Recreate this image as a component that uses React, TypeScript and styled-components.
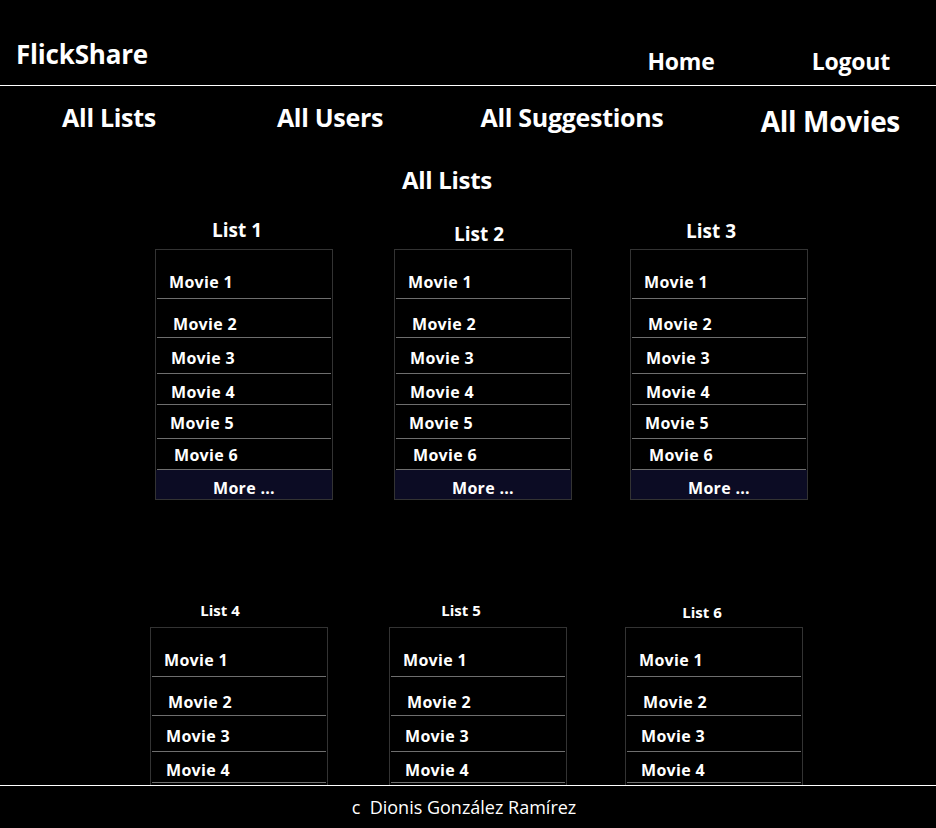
import React from "react";
import styled, { createGlobalStyle } from "styled-components";

const GlobalStyle = createGlobalStyle`
  html, body {
    margin: 0;
    padding: 0;
    background: #000;
    color: #fff;
    font-family: "Open Sans", "Noto Sans", sans-serif;
    overflow: hidden;
  }
  * { box-sizing: border-box; }
`;

const Page = styled.div`
  display: flex;
  flex-direction: column;
  height: 100vh;
  overflow: hidden;
  background: #000;
`;

const Header = styled.header`
  flex: 0 0 86px;
  display: flex;
  align-items: flex-start;
  border-bottom: 1px solid #fff;
`;

const Logo = styled.div`
  padding: 36px 0 0 16px;
  font-size: 26px;
  font-weight: 700;
  letter-spacing: -0.2px;
  line-height: 36px;
`;

const TopLinks = styled.nav`
  margin-left: auto;
  display: flex;
  gap: 97px;
  padding: 45px 46px 0 0;
`;

const TopLink = styled.a`
  font-size: 23px;
  font-weight: 700;
  line-height: 32px;
  letter-spacing: -0.2px;
  color: #fff;
  text-decoration: none;
`;

const NavBar = styled.nav`
  flex: 0 0 62px;
  display: grid;
  grid-template-columns: 218px 224px 260px 1fr;
  align-items: center;
`;

const NavItem = styled.a<{ $big?: boolean }>`
  font-size: ${(p) => (p.$big ? "28px" : "25px")};
  font-weight: 700;
  letter-spacing: -0.3px;
  line-height: 36px;
  color: #fff;
  text-decoration: none;
  text-align: ${(p) => (p.$big ? "right" : "center")};
  padding: ${(p) => (p.$big ? "8px 36px 0 0" : "0")};
`;

const Main = styled.main`
  flex: 1;
  overflow: hidden;
`;

const PageTitle = styled.h1`
  margin: 0;
  height: 64px;
  line-height: 64px;
  text-align: center;
  font-size: 24px;
  font-weight: 700;
  letter-spacing: -0.3px;
  padding-right: 42px;
`;

const CardRow = styled.section<{ $left: number; $top: number }>`
  display: grid;
  grid-template-columns: 239px 236px 178px;
  padding-left: ${(p) => p.$left}px;
  margin-top: ${(p) => p.$top}px;
`;

const Card = styled.div`
  width: 178px;
  display: flex;
  flex-direction: column;
`;

const CardTitle = styled.h2<{ $small?: boolean; $shift: number; $dx: number }>`
  margin: 0;
  height: 37px;
  padding-top: ${(p) => p.$shift}px;
  line-height: ${(p) => (p.$small ? "20px" : "24px")};
  font-size: ${(p) => (p.$small ? "15px" : "19px")};
  font-weight: 700;
  text-align: center;
  transform: translateX(${(p) => p.$dx}px);
`;

const ListBox = styled.ul`
  list-style: none;
  margin: 0;
  padding: 0;
  border: 1px solid #333;
`;

const MovieRow = styled.li<{ $h: number; $top: number; $x: number }>`
  height: ${(p) => p.$h}px;
  margin: 0 1px 0 1px;
  padding: ${(p) => p.$top}px 0 0 ${(p) => p.$x}px;
  border-bottom: 1px solid #6e6e6e;
  font-size: 16px;
  font-weight: 700;
  line-height: 20px;
  letter-spacing: 0.3px;
`;

const MoreRow = styled.li`
  height: 29px;
  background: #0c0c24;
  text-align: center;
  padding-top: 8px;
  font-size: 16px;
  font-weight: 700;
  line-height: 20px;
  letter-spacing: 0.3px;
`;

const Footer = styled.footer`
  flex: 0 0 43px;
  border-top: 1px solid #fff;
  display: flex;
  align-items: center;
  justify-content: center;
  font-size: 18px;
  padding: 0 8px 0 0;
  white-space: pre;
`;

const rows = [
  { h: 49, top: 22, x: 12 },
  { h: 39, top: 15, x: 16 },
  { h: 36, top: 10, x: 14 },
  { h: 31, top: 8, x: 14 },
  { h: 34, top: 8, x: 13 },
  { h: 31, top: 6, x: 17 },
];

const topLists = [
  { name: "List 1", shift: 6, dx: -7 },
  { name: "List 2", shift: 10, dx: -4 },
  { name: "List 3", shift: 7, dx: -8 },
];

const bottomLists = [
  { name: "List 4", shift: 10, dx: -19 },
  { name: "List 5", shift: 10, dx: -17 },
  { name: "List 6", shift: 12, dx: -12 },
];

function ListCard({
  name,
  shift,
  dx,
  small,
}: {
  name: string;
  shift: number;
  dx: number;
  small?: boolean;
}) {
  return (
    <Card>
      <CardTitle $small={small} $shift={shift} $dx={dx}>
        {name}
      </CardTitle>
      <ListBox>
        {rows.map((r, i) => (
          <MovieRow key={i} $h={r.h} $top={r.top} $x={r.x}>
            Movie {i + 1}
          </MovieRow>
        ))}
        <MoreRow>More ...</MoreRow>
      </ListBox>
    </Card>
  );
}

export default function App() {
  return (
    <>
      <GlobalStyle />
      <Page>
        <Header>
          <Logo>FlickShare</Logo>
          <TopLinks>
            <TopLink href="#">Home</TopLink>
            <TopLink href="#">Logout</TopLink>
          </TopLinks>
        </Header>
        <NavBar>
          <NavItem href="#">All Lists</NavItem>
          <NavItem href="#">All Users</NavItem>
          <NavItem href="#">All Suggestions</NavItem>
          <NavItem href="#" $big>
            All Movies
          </NavItem>
        </NavBar>
        <Main>
          <PageTitle>All Lists</PageTitle>
          <CardRow $left={155} $top={0}>
            {topLists.map((l) => (
              <ListCard key={l.name} {...l} />
            ))}
          </CardRow>
          <CardRow $left={150} $top={90}>
            {bottomLists.map((l) => (
              <ListCard key={l.name} {...l} small />
            ))}
          </CardRow>
        </Main>
        <Footer>{"c  Dionis González Ramírez"}</Footer>
      </Page>
    </>
  );
}
